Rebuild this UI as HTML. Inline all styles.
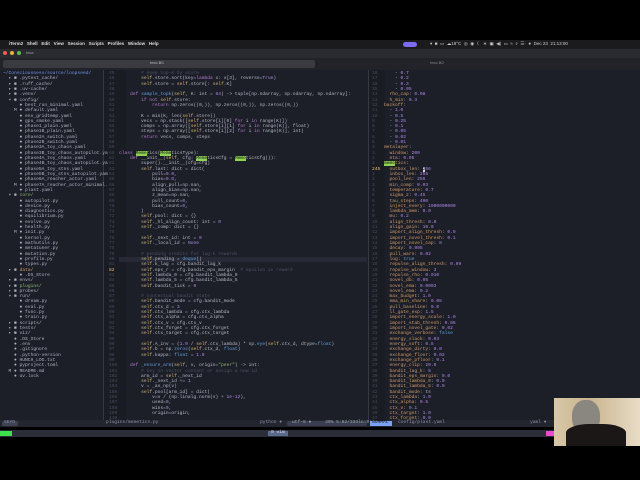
<!DOCTYPE html>
<html><head><meta charset="utf-8"><style>
*{margin:0;padding:0;box-sizing:border-box}
body{width:640px;height:480px;background:#000;position:relative;overflow:hidden;font-family:"Liberation Mono",monospace}
.abs{position:absolute}
pre{font-family:"Liberation Mono",monospace;font-size:4.6px;line-height:5.32px;white-space:pre;color:#b4b8c6}
.k{color:#b37ad0}.s{color:#d8b572}.n{color:#ad88e8}.f{color:#5fa0e0}.c{color:#4c5166}.g{color:#8fb872}.y{color:#d39a66}.d{color:#454a5e}.hl{background:#8fd454;color:#111}
.tree{color:#aeb2c4}.b{color:#6f96e8}
</style></head><body>
<div class="abs" style="left:0;top:40px;width:640px;height:9px;background:#1b1b1d"></div>
<div class="abs" style="left:5px;top:41px;font:bold 4.5px 'Liberation Sans',sans-serif;color:#ddd;white-space:pre">   iTerm2   Shell   Edit   View   Session   Scripts   Profiles   Window   Help</div>
<div class="abs" style="left:403px;top:42px;width:14px;height:5px;border-radius:3px;background:#7b6cf0"></div>
<div class="abs" style="left:430px;top:41px;font:4.5px 'Liberation Sans',sans-serif;color:#ccc;white-space:pre">▾  ■  ▭  ☁18°C  ◎  ◉  ☾  ∗  ▣  ◀)  ▭  ≈  ⌕  ☰·  ●  Dec 23  21:13:00</div>
<div class="abs" style="left:0;top:49px;width:640px;height:9px;background:#2a2b30"></div>
<div class="abs" style="left:3px;top:51px;width:4px;height:4px;border-radius:50%;background:#ec5f57"></div>
<div class="abs" style="left:10px;top:51px;width:4px;height:4px;border-radius:50%;background:#e4b73b"></div>
<div class="abs" style="left:17px;top:51px;width:4px;height:4px;border-radius:50%;background:#58c146"></div>
<div class="abs" style="left:26px;top:51px;font:3.5px 'Liberation Sans',sans-serif;color:#aaa">tmux</div>
<div class="abs" style="left:0;top:58px;width:640px;height:12px;background:#222328"></div>
<div class="abs" style="left:3px;top:60px;width:312px;height:8px;border-radius:2px;background:#3a3b40"></div>
<div class="abs" style="left:150px;top:61px;font:3.5px 'Liberation Sans',sans-serif;color:#bbb">tmux ⌘1</div>
<div class="abs" style="left:430px;top:61px;font:3.5px 'Liberation Sans',sans-serif;color:#888">tmux ⌘2</div>
<div class="abs" style="left:0;top:70px;width:640px;height:357px;background:#1d1f28"></div>
<div class="abs" style="left:103px;top:70px;width:1px;height:350px;background:#353846"></div>
<div class="abs" style="left:368px;top:70px;width:1px;height:350px;background:#353846"></div>
<div class="abs" style="left:104px;top:70px;width:22px;height:350px;background:#1a1c24"></div>
<div class="abs" style="left:369px;top:70px;width:16px;height:350px;background:#1a1c24"></div>
<pre class="abs tree" style="left:3px;top:71px"><span class="b">~/Consciousness/source/loopseed/</span>
  ▸ ■ .pytest_cache/
  ▸ ■ .ruff_cache/
  ▸ ■ .uv-cache/
  ▸ ■ .venv/
  ▾ ■ config/
      ● best_run_minimal.yaml
    M ● default.yaml
      ● env_gridtemp.yaml
      ● gpu_smoke.yaml
      ● phase1_plain.yaml
      ● phase1B_plain.yaml
      ● phase2A_switch.yaml
      ● phase2B_switch.yaml
      ● phase3A_toy_chaos.yaml
      ● phase3B_toy_chaos_autopilot.ya
      ● phase4A_toy_chaos.yaml
      ● phase4B_toy_chaos_autopilot.ya
      ● phase5A_toy_stns.yaml
      ● phase5B_toy_stns_autopilot.yam
      ● phase6A_reacher_actor.yaml
    M ● phase7A_reacher_actor_minimal.
      ● plast.yaml
  ▾ ■ <span class="g">core/</span>
      ● autopilot.py
      ● device.py
      ● diagnostics.py
      ● equilibrium.py
      ● evolve.py
      ● health.py
    M ● init.py
      ● kernel.py
      ● mathutils.py
      ● metatuner.py
      ● mutation.py
      ● profile.py
      ● types.py
  ▸ ■ <span class="y">data/</span>
      ● .DS_Store
  ▸ ■ envs/
  ▸ ■ <span class="g">plugins/</span>
  ▸ ■ probes/
  ▾ ■ run/
      ● dream.py
      ● eval.py
      ● func.py
      ● train.py
  ▸ ■ scripts/
  ▸ ■ tests/
  ▸ ■ viz/
    ● .DS_Store
    ● .env
    ● .gitignore
    ● .python-version
    ● HUNCH_LOG.txt
    ● pyproject.toml
  M ● README.md
    ● uv.lock</pre>
<pre class="abs d" style="left:109px;top:71px">45
46
47
48
49
50
51
52
53
54
55
56
57
58
59
60
61
62
63
64
65
66
67
68
69
70
71
72
73
74
75
76
77
78
79
80
81
<span style="color:#e5c07b">82</span>
83
84
85
86
87
88
89
90
91
92
93
94
95
96
97
98
99
100
101
102
103
104
105
106
107
108
109
110
111</pre>
<pre class="abs" style="left:119px;top:71px">
        <span class="c"># keep top-K by score</span>
        <span class="s">self</span>.store.sort(key=<span class="k">lambda</span> x: x[3], reverse=<span class="n">True</span>)
        <span class="s">self</span>.store = <span class="s">self</span>.store[: <span class="s">self</span>.K]

    <span class="k">def</span> <span class="f">sample_topk</span>(<span class="s">self</span>, K: int = <span class="n">64</span>) -> tuple[np.ndarray, np.ndarray, np.ndarray]:
        <span class="k">if not</span> <span class="s">self</span>.store:
            <span class="k">return</span> np.zeros((0,)), np.zeros((0,)), np.zeros((0,))

        K = min(K, len(<span class="s">self</span>.store))
        vecs = np.stack([<span class="s">self</span>.store[i][0] <span class="k">for</span> i <span class="k">in</span> range(K)])
        comps = np.array([<span class="s">self</span>.store[i][1] <span class="k">for</span> i <span class="k">in</span> range(K)], float)
        steps = np.array([<span class="s">self</span>.store[i][2] <span class="k">for</span> i <span class="k">in</span> range(K)], int)
        <span class="k">return</span> vecs, comps, steps


<span class="k">class</span> <span class="hl">Meme</span>tics(<span class="hl">Meme</span>ticsType):
    <span class="k">def</span> __init__(<span class="s">self</span>, cfg: <span class="hl">Meme</span>ticsCfg = <span class="hl">Meme</span>ticsCfg()):
        super().__init__(cfg=cfg)
        <span class="s">self</span>.last: dict = dict(
            pull=<span class="n">0.0</span>,
            bias=<span class="n">0.0</span>,
            align_pull=np.nan,
            align_bias=np.nan,
            z_mean=np.nan,
            pull_count=<span class="n">0</span>,
            bias_count=<span class="n">0</span>,
        )
        <span class="s">self</span>.pool: dict = {}
        <span class="s">self</span>._hl_align_count: int = <span class="n">0</span>
        <span class="s">self</span>._comp: dict = {}

        <span class="s">self</span>._next_id: int = <span class="n">0</span>
        <span class="s">self</span>._local_id = <span class="n">None</span>

        <span class="c"># pending credits for lag-k rewards</span>
<span style="background:#262936;display:inline-block;width:248px">        <span class="s">self</span>.pending = <span class="f">deque</span>()</span>
        <span class="s">self</span>.k_lag = cfg.bandit_lag_k
        <span class="s">self</span>.eps_r = cfg.bandit_eps_margin  <span class="c"># epsilon in reward</span>
        <span class="s">self</span>.lambda_0 = cfg.bandit_lambda_0
        <span class="s">self</span>.lambda_5 = cfg.bandit_lambda_5
        <span class="s">self</span>.bandit_tick = <span class="n">0</span>

        <span class="c"># contextual bandit state</span>
        <span class="s">self</span>.bandit_mode = cfg.bandit_mode
        <span class="s">self</span>.ctx_d = <span class="n">3</span>
        <span class="s">self</span>.ctx_lambda = cfg.ctx_lambda
        <span class="s">self</span>.ctx_alpha = cfg.ctx_alpha
        <span class="s">self</span>.ctx_v = cfg.ctx_v
        <span class="s">self</span>.ctx_forget = cfg.ctx_forget
        <span class="s">self</span>.ctx_target = cfg.ctx_target

        <span class="s">self</span>.A_inv = (<span class="n">1.0</span> / <span class="s">self</span>.ctx_lambda) * np.<span class="f">eye</span>(<span class="s">self</span>.ctx_d, dtype=<span class="f">float</span>)
        <span class="s">self</span>.b = np.<span class="f">zeros</span>(<span class="s">self</span>.ctx_d, <span class="f">float</span>)
        <span class="s">self</span>.kappa: <span class="f">float</span> = <span class="n">1.0</span>

    <span class="k">def</span> <span class="f">_ensure_arm</span>(<span class="s">self</span>, v, origin=<span class="g">"peer"</span>) -> int:
        <span class="c"># key on vector content or assign a new id</span>
        arm_id = <span class="s">self</span>._next_id
        <span class="s">self</span>._next_id += <span class="n">1</span>
        v = _as_np(v)
        <span class="s">self</span>.pool[arm_id] = dict(
            v=v / (np.linalg.norm(v) + <span class="n">1e-12</span>),
            used=<span class="n">0</span>,
            wins=<span class="n">0</span>,
            origin=origin,</pre>
<pre class="abs d" style="left:372px;top:71px">16
17
18
15
14
13
12
11
10
9
8
7
6
5
4
3
2
1
<span style="color:#e5c07b">245</span>
1
2
3
4
5
6
7
8
9
10
11
12
13
14
15
16
17
18
19
20
21
22
23
24
25
26
27
28
29
30
31
32
33
34
35
36
37
38
39
40
41
42
43
44
45
46
47</pre>
<pre class="abs" style="left:384px;top:71px">    - <span class="n">0.7</span>
    - <span class="n">0.2</span>
    - <span class="n">0.3</span>
    - <span class="n">0.05</span>
  <span class="y">rho_cap</span>: <span class="n">0.98</span>
  <span class="y">h_min</span>: <span class="n">0.3</span>
<span class="y">backoff</span>:
  - <span class="n">1.0</span>
  - <span class="n">0.5</span>
  - <span class="n">0.25</span>
  - <span class="n">0.1</span>
  - <span class="n">0.05</span>
  - <span class="n">0.02</span>
  - <span class="n">0.01</span>
<span class="y">metalayer</span>:
  <span class="y">window</span>: <span class="n">200</span>
  <span class="y">eta</span>: <span class="n">0.05</span>
<span class="hl">meme</span><span class="y">tics</span>:
  <span class="y">outbox_len</span>: <span style="background:#ddd;color:#111">2</span><span class="n">56</span>
  <span class="y">inbox_len</span>: <span class="n">256</span>
  <span class="y">pool_len</span>: <span class="n">256</span>
  <span class="y">min_comp</span>: <span class="n">0.03</span>
  <span class="y">temperature</span>: <span class="n">0.7</span>
  <span class="y">sigma_2</span>: <span class="n">0.45</span>
  <span class="y">tau_steps</span>: <span class="n">400</span>
  <span class="y">inject_every</span>: <span class="n">1000000000</span>
  <span class="y">lambda_mem</span>: <span class="n">0.0</span>
  <span class="y">mu</span>: <span class="n">0.2</span>
  <span class="y">align_thresh</span>: <span class="n">0.0</span>
  <span class="y">align_gain</span>: <span class="n">10.0</span>
  <span class="y">import_align_thresh</span>: <span class="n">0.9</span>
  <span class="y">import_novel_thresh</span>: <span class="n">0.1</span>
  <span class="y">import_novel_cap</span>: <span class="n">8</span>
  <span class="y">decay</span>: <span class="n">0.995</span>
  <span class="y">pull_warn</span>: <span class="n">0.02</span>
  <span class="y">log</span>: <span class="f">true</span>
  <span class="y">repulse_align_thresh</span>: <span class="n">0.99</span>
  <span class="y">repulse_window</span>: <span class="n">3</span>
  <span class="y">repulse_rho</span>: <span class="n">0.010</span>
  <span class="y">novel_db</span>: <span class="n">0.05</span>
  <span class="y">novel_ema</span>: <span class="n">0.0003</span>
  <span class="y">novel_ema</span>: <span class="n">0.2</span>
  <span class="y">max_budget</span>: <span class="n">1.0</span>
  <span class="y">ema_min_share</span>: <span class="n">0.05</span>
  <span class="y">pull_baseline</span>: <span class="n">0.0</span>
  <span class="y">ll_gate_exp</span>: <span class="n">1.5</span>
  <span class="y">import_energy_scale</span>: <span class="n">1.0</span>
  <span class="y">import_stab_thresh</span>: <span class="n">0.05</span>
  <span class="y">import_novel_gate</span>: <span class="n">0.02</span>
  <span class="y">exchange_verbose</span>: <span class="f">false</span>
  <span class="y">energy_slack</span>: <span class="n">0.03</span>
  <span class="y">energy_soft</span>: <span class="n">0.5</span>
  <span class="y">exchange_dirty</span>: <span class="n">0.0</span>
  <span class="y">exchange_floor</span>: <span class="n">0.02</span>
  <span class="y">exchange_pfloor</span>: <span class="n">0.1</span>
  <span class="y">energy_clip</span>: <span class="n">20.0</span>
  <span class="y">bandit_lag_k</span>: <span class="n">5</span>
  <span class="y">bandit_eps_margin</span>: <span class="n">0.0</span>
  <span class="y">bandit_lambda_0</span>: <span class="n">0.0</span>
  <span class="y">bandit_lambda_5</span>: <span class="n">0.0</span>
  <span class="y">bandit_mode</span>: ts
  <span class="y">ctx_lambda</span>: <span class="n">1.0</span>
  <span class="y">ctx_alpha</span>: <span class="n">0.5</span>
  <span class="y">ctx_v</span>: <span class="n">0.1</span>
  <span class="y">ctx_target</span>: <span class="n">1.0</span>
  <span class="y">ctx_forget</span>: <span class="n">0.0</span></pre>
<div class="abs" style="left:0;top:420px;width:640px;height:7px;background:#23252f"></div>
<div class="abs" style="left:2px;top:421px;width:16px;height:5px;border-radius:2px;background:#3e4254"></div>
<pre class="abs" style="left:4px;top:420px;color:#8a90a8">SEYD</pre>
<pre class="abs" style="left:106px;top:420px;color:#8a90a8">plugins/memetics.py</pre>
<pre class="abs" style="left:260px;top:420px;color:#8a90a8">python ●</pre>
<div class="abs" style="left:287px;top:421px;width:80px;height:5px;border-radius:2px;background:#3a3e50"></div>
<pre class="abs" style="left:292px;top:420px;color:#9aa">utf-8 ●     39% 5:82/333ln:9:38</pre>
<div class="abs" style="left:370px;top:421px;width:22px;height:5px;background:#7aa2f7"></div>
<pre class="abs" style="left:372px;top:420px;color:#111">NORMAL</pre>
<pre class="abs" style="left:398px;top:420px;color:#8a90a8">config/plast.yaml</pre>
<pre class="abs" style="left:530px;top:420px;color:#8a90a8">yaml ●</pre>
<div class="abs" style="left:0;top:430px;width:640px;height:7px;background:#2b2d38"></div>
<div class="abs" style="left:0;top:431px;width:12px;height:5px;background:#3ce04a"></div>
<div class="abs" style="left:268px;top:431px;width:20px;height:5px;background:#5a6a8a"></div>
<pre class="abs" style="left:271px;top:430px;color:#dde">0 vim</pre>
<div class="abs" style="left:546px;top:431px;width:8px;height:5px;background:#e84cd0"></div>
<div class="abs" style="left:554px;top:398px;width:86px;height:48px;background:linear-gradient(90deg,#d8c8a8,#c9b48e 40%,#e8dcc6)"></div>
<div class="abs" style="left:572px;top:400px;width:28px;height:34px;border-radius:45%;background:#8a8680"></div>
<div class="abs" style="left:566px;top:424px;width:60px;height:22px;border-radius:40% 40% 0 0;background:#1a1716"></div>
</body></html>
